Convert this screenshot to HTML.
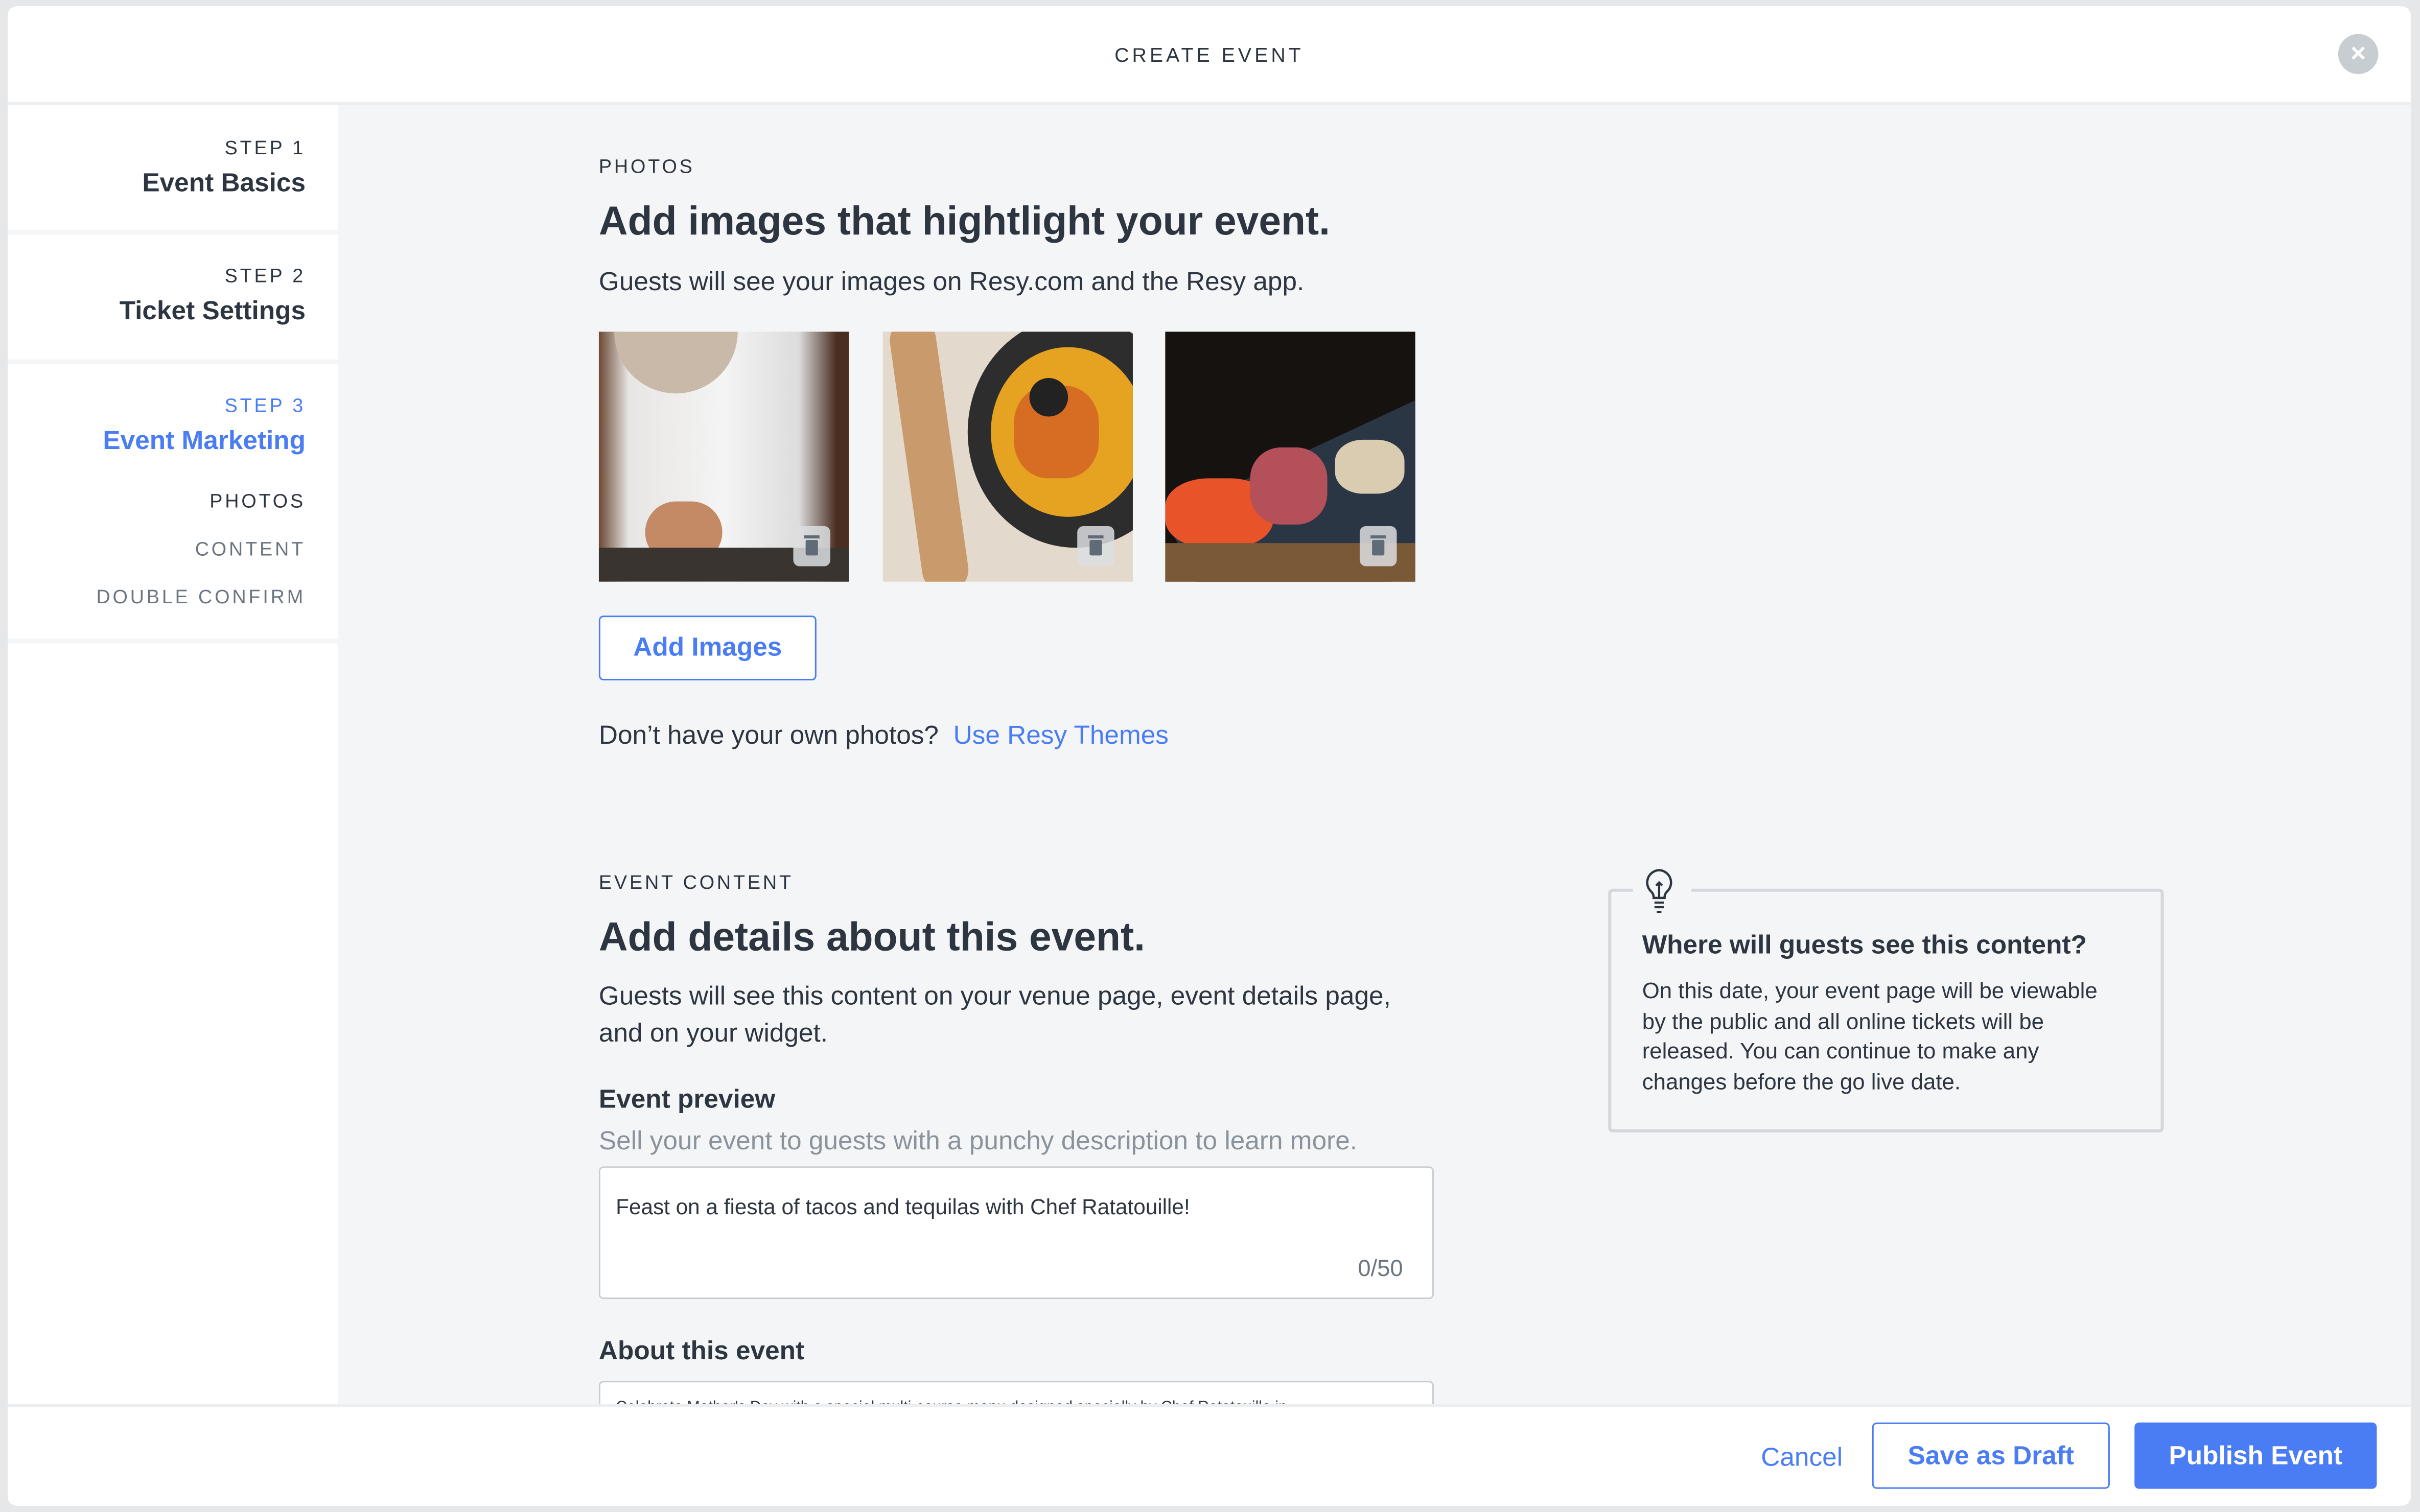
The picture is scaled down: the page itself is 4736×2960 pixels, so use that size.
<!DOCTYPE html>
<html><head><meta charset="utf-8"><style>
html,body{margin:0;padding:0;width:4736px;height:2960px;overflow:hidden;background:#e6e7e9}
#s{position:absolute;left:0;top:0;width:1568px;height:980px;transform:scale(3.0204);transform-origin:0 0;font-family:"Liberation Sans",sans-serif;color:#2c3540}
.a{position:absolute}
.cap{letter-spacing:1.6px;font-size:12.5px}
.ph{position:absolute;top:211px;width:162px;height:162px;overflow:hidden}
.tr{position:absolute;right:12px;bottom:10px;width:24px;height:26px;border-radius:4px;background:rgba(220,222,225,.85)}
.tr:before{content:"";position:absolute;left:8px;top:9px;width:8px;height:10px;background:#5f6b77;border-radius:1px}
.tr:after{content:"";position:absolute;left:7px;top:6px;width:10px;height:2px;background:#5f6b77}
</style></head><body><div id="s">
<div class="a" style="left:5px;top:4px;width:1557px;height:972px;background:#f4f5f7;border-radius:6px;overflow:hidden">
 <div class="a" style="left:0;top:0;width:1557px;height:62px;background:#fff;border-bottom:2px solid #eceef0"></div>
 <div class="a cap" style="left:0;width:1557px;top:24px;text-align:center;font-size:13px;letter-spacing:2px">CREATE EVENT</div>
 <div class="a" style="left:1510px;top:18px;width:26px;height:26px;border-radius:50%;background:#c8cdd1;color:#fff;text-align:center;line-height:26px;font-size:17px;font-weight:bold">×</div>
 <div class="a" style="left:0;top:64px;width:214px;height:908px;background:#f4f5f7"></div>
 <div class="a" style="left:0;top:64px;width:214px;height:81px;background:#fff"></div>
 <div class="a" style="left:0;top:148px;width:214px;height:81px;background:#fff"></div>
 <div class="a" style="left:0;top:232px;width:214px;height:178px;background:#fff"></div>
 <div class="a" style="left:0;top:413px;width:214px;height:500px;background:#fff"></div>
 <div class="a" style="right:1364px;top:85px;text-align:right;width:200px"><div class="cap">STEP 1</div><div style="font-weight:bold;font-size:17px;margin-top:6px">Event Basics</div></div>
 <div class="a" style="right:1364px;top:168px;text-align:right;width:200px"><div class="cap">STEP 2</div><div style="font-weight:bold;font-size:17px;margin-top:6px">Ticket Settings</div></div>
 <div class="a" style="right:1364px;top:252px;text-align:right;width:200px;color:#4a7cf4"><div class="cap">STEP 3</div><div style="font-weight:bold;font-size:17px;margin-top:6px">Event Marketing</div></div>
 <div class="a cap" style="right:1364px;top:314px;text-align:right">PHOTOS</div>
 <div class="a cap" style="right:1364px;top:345px;text-align:right;color:#6b7580">CONTENT</div>
 <div class="a cap" style="right:1364px;top:376px;text-align:right;color:#6b7580">DOUBLE CONFIRM</div>

 <div class="a cap" style="left:383px;top:97px">PHOTOS</div>
 <div class="a" style="left:383px;top:124px;font-size:26px;font-weight:bold">Add images that hightlight your event.</div>
 <div class="a" style="left:383px;top:169px;font-size:17px">Guests will see your images on Resy.com and the Resy app.</div>
 <div class="ph" style="left:383px;background:linear-gradient(90deg,#6b4a35 0%,#e8e6e4 12%,#f4f4f4 50%,#dcdcdc 80%,#4a2e22 95%);"><div class="a" style="left:10px;top:0;width:80px;height:40px;background:#c8b9a8;border-radius:0 0 40px 40px"></div><div class="a" style="left:30px;top:110px;width:50px;height:40px;background:#c48a66;border-radius:20px"></div><div class="a" style="left:0;bottom:0;width:162px;height:22px;background:#3a3431"></div><div class="tr"></div></div>
 <div class="ph" style="left:567px;background:#e3d9cc"><div class="a" style="left:15px;top:-10px;width:30px;height:180px;background:#c99a6b;border-radius:15px;transform:rotate(-8deg)"></div><div class="a" style="left:55px;top:-10px;width:140px;height:150px;background:#2d2d2e;border-radius:50%"></div><div class="a" style="left:70px;top:10px;width:100px;height:110px;background:#e5a321;border-radius:50%"></div><div class="a" style="left:85px;top:35px;width:55px;height:60px;background:#d66d22;border-radius:40%"></div><div class="a" style="left:95px;top:30px;width:25px;height:25px;background:#222;border-radius:50%"></div><div class="tr"></div></div>
 <div class="ph" style="left:750px;background:#15120f"><div class="a" style="left:0;width:200px;height:100px;background:#2b3645;transform:rotate(-25deg);transform-origin:0 0;top:120px"></div><div class="a" style="left:0;top:95px;width:70px;height:45px;background:#e8532a;border-radius:40%"></div><div class="a" style="left:55px;top:75px;width:50px;height:50px;background:#b4505a;border-radius:40%"></div><div class="a" style="left:110px;top:70px;width:45px;height:35px;background:#d9ccb0;border-radius:40%"></div><div class="a" style="left:0;bottom:0;width:162px;height:25px;background:#7a5a36"></div><div class="tr"></div></div>
 <div class="a" style="left:383px;top:395px;width:139px;height:40px;border:1px solid #4a7cf4;border-radius:3px;background:#fff;color:#4a7cf4;font-weight:bold;font-size:17px;text-align:center;line-height:40px">Add Images</div>
 <div class="a" style="left:383px;top:463px;font-size:17px">Don’t have your own photos?&nbsp; <span style="color:#4a7cf4">Use Resy Themes</span></div>

 <div class="a cap" style="left:383px;top:561px">EVENT CONTENT</div>
 <div class="a" style="left:383px;top:588px;font-size:26px;font-weight:bold">Add details about this event.</div>
 <div class="a" style="left:383px;top:630px;font-size:17px;line-height:24px;width:540px">Guests will see this content on your venue page, event details page, and on your widget.</div>
 <div class="a" style="left:383px;top:699px;font-size:17px;font-weight:bold">Event preview</div>
 <div class="a" style="left:383px;top:726px;font-size:17px;color:#8a939c">Sell your event to guests with a punchy description to learn more.</div>
 <div class="a" style="left:383px;top:752px;width:539px;height:84px;background:#fff;border:1px solid #c8ced3;border-radius:3px"></div>
 <div class="a" style="left:394px;top:770px;font-size:14px">Feast on a fiesta of tacos and tequilas with Chef Ratatouille!</div>
 <div class="a" style="left:860px;top:810px;font-size:15px;color:#6b7580;width:44px;text-align:right">0/50</div>
 <div class="a" style="left:383px;top:862px;font-size:17px;font-weight:bold">About this event</div>
 <div class="a" style="left:383px;top:891px;width:539px;height:40px;background:#fff;border:1px solid #c8ced3;border-radius:3px;overflow:hidden"><div style="margin:11px 10px;font-size:10px">Celebrate Mother's Day with a special multi-course menu designed specially by Chef Ratatouille in</div></div>

 <div class="a" style="left:1037px;top:572px;width:356px;height:154px;border:2px solid #d3d8dc;border-radius:3px"></div>
 <div class="a" style="left:1053px;top:558px;width:38px;height:30px;background:#f4f5f7"></div>
 <svg class="a" style="left:1059px;top:558px" width="22" height="32" viewBox="0 0 22 32"><path d="M11 2a8 8 0 0 0-5 14c1 1 1.5 2.5 1.5 4h7c0-1.5.5-3 1.5-4A8 8 0 0 0 11 2z" fill="none" stroke="#2c3540" stroke-width="1.5"/><path d="M8 23h6M8 26h6M9.5 29h3M11 20v-9M9 12l2-2 2 2" fill="none" stroke="#2c3540" stroke-width="1.4"/></svg>
 <div class="a" style="left:1059px;top:599px;font-size:17px;font-weight:bold">Where will guests see this content?</div>
 <div class="a" style="left:1059px;top:630px;font-size:14.5px;line-height:19.5px;width:305px">On this date, your event page will be viewable by the public and all online tickets will be released. You can continue to make any changes before the go live date.</div>

 <div class="a" style="left:0;top:906px;width:1557px;height:66px;background:#fff;border-top:2px solid #eceef0"></div>
 <div class="a" style="left:1136px;top:931px;font-size:17px;color:#4a7cf4">Cancel</div>
 <div class="a" style="left:1208px;top:918px;width:152px;height:41px;border:1px solid #4a7cf4;border-radius:3px;color:#4a7cf4;font-weight:bold;font-size:17px;text-align:center;line-height:41px">Save as Draft</div>
 <div class="a" style="left:1378px;top:918px;width:157px;height:43px;background:#4a7cf4;border-radius:3px;color:#fff;font-weight:bold;font-size:17px;text-align:center;line-height:43px">Publish Event</div>
</div>
</div></body></html>
